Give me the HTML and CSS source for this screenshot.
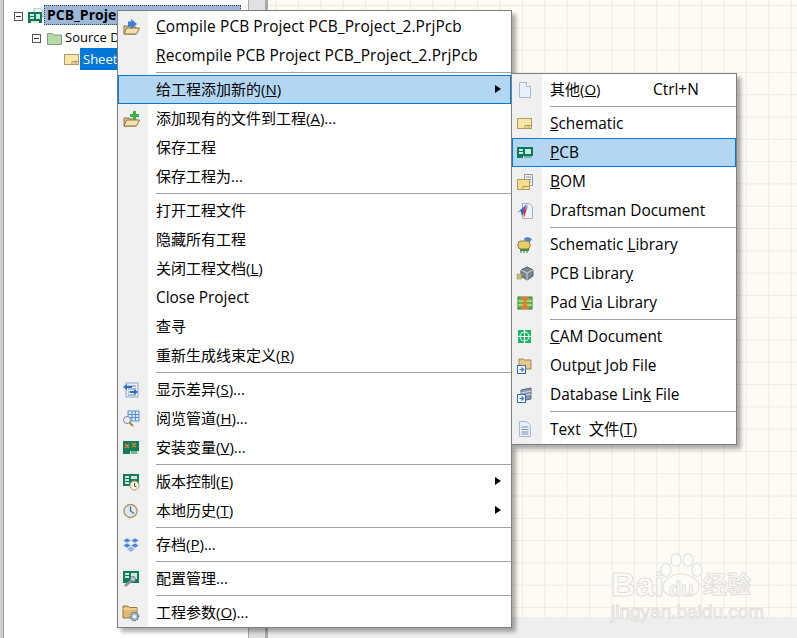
FILE: index.html
```html
<!DOCTYPE html>
<html lang="zh">
<head>
<meta charset="utf-8">
<title>PCB Project</title>
<link rel="stylesheet" href="styles.css">
</head>
<body>
<div class="app">
  <div class="rail"></div>
  <aside class="tree">
    <div class="row row-project">
      <span class="box"></span>
      <svg class="ticon" width="16" height="16" viewBox="0 0 16 16"><path d="M6 0h6l3 3v6H6z" fill="#eef1f6" stroke="#a9b2c4"/><rect x="0" y="4" width="14" height="11" fill="#0b7a5c"/><path d="M2 6h4v2H2zM2 9h4v2H2zM8 6h4v5H8z" fill="#cfe8dc"/><path d="M3 13h8v2H3z" fill="#e6e6d0"/></svg>
      <span class="label-project">PCB_Proje</span>
    </div>
    <div class="row row-source">
      <span class="box"></span>
      <svg class="ticon" width="15" height="13" viewBox="0 0 15 13"><path d="M.5 12.5V1.5h5l1.5 1.5h7.500v9.500z" fill="#b5dba8" stroke="#8a9a80"/></svg>
      <span class="label-source">Source D</span>
    </div>
    <div class="row row-sheet">
      <svg class="ticon" width="15" height="11" viewBox="0 0 15 11"><rect x=".5" y=".5" width="14" height="10" fill="#f6e7a8" stroke="#b49a5c"/><path d="M8 10.500V7.500h6.500M10 9h3" fill="none" stroke="#b49a5c"/></svg>
      <span class="label-sheet">Sheet</span>
    </div>
  </aside>
  <div class="split"></div>
  <div class="bar"></div>
  <main class="work">
    <div class="canvas"></div>
    <div class="foot"></div>
  </main>
</div>

<nav class="menu main-menu">
  <div class="item"><svg class="ic" width="18" height="18" viewBox="0 0 18 18"><path d="M2 8h5l1 1h6v7H2z" fill="#e0c690" stroke="#8a7448"/><path d="M2 16l2.500-6h13l-3 6z" fill="#f7e0aa" stroke="#8a7448"/><path d="M9 1l6 5-6 5V8.500H6v-5h3z" fill="#3d7fd9"/></svg><span class="lb en wide"><u>C</u>ompile PCB Project PCB_Project_2.PrjPcb</span></div>
  <div class="item"><span class="ic-empty"></span><span class="lb en wide"><u>R</u>ecompile PCB Project PCB_Project_2.PrjPcb</span></div>
  <div class="sep"></div>
  <div class="item hot"><span class="ic-empty"></span><span class="lb zh">给工程添加新的(<u>N</u>)</span><i class="arrow"></i></div>
  <div class="item"><svg class="ic" width="18" height="18" viewBox="0 0 18 18"><path d="M2 8h5l1 1h6v7H2z" fill="#e0c690" stroke="#8a7448"/><path d="M2 16l2.500-6h13l-3 6z" fill="#f7e0aa" stroke="#8a7448"/><path d="M11 1h3v3h3v3h-3v3h-3V7H8V4h3z" fill="#3cb043"/></svg><span class="lb zh">添加现有的文件到工程(<u>A</u>)...</span></div>
  <div class="item"><span class="ic-empty"></span><span class="lb zh">保存工程</span></div>
  <div class="item"><span class="ic-empty"></span><span class="lb zh">保存工程为...</span></div>
  <div class="sep"></div>
  <div class="item"><span class="ic-empty"></span><span class="lb zh">打开工程文件</span></div>
  <div class="item"><span class="ic-empty"></span><span class="lb zh">隐藏所有工程</span></div>
  <div class="item"><span class="ic-empty"></span><span class="lb zh">关闭工程文档(<u>L</u>)</span></div>
  <div class="item"><span class="ic-empty"></span><span class="lb en">Close Project</span></div>
  <div class="item"><span class="ic-empty"></span><span class="lb zh">查寻</span></div>
  <div class="item"><span class="ic-empty"></span><span class="lb zh">重新生成线束定义(<u>R</u>)</span></div>
  <div class="sep"></div>
  <div class="item"><svg class="ic" width="18" height="18" viewBox="0 0 18 18"><rect x="4" y="2" width="12" height="14" fill="#e8eef8" stroke="#8fa6c8"/><path d="M6 5h8M6 8h8M6 11h8M6 14h8" stroke="#6f8fc0"/><path d="M1 6l4-3v2h5v2H5v2zM16 11l-4 3v-2H8v-2h4V8z" fill="#2e6fc4"/></svg><span class="lb zh">显示差异(<u>S</u>)...</span></div>
  <div class="item"><svg class="ic" width="18" height="18" viewBox="0 0 18 18"><rect x="6" y="1" width="11" height="10" fill="#dbe8fa" stroke="#5b8fd8"/><path d="M6 4.500h11M6 7.500h11M10 1v10M13.500 1v10" stroke="#5b8fd8"/><circle cx="5" cy="10" r="3.500" fill="#eef2f6" stroke="#7a8696"/><path d="M7.500 12.500l3.500 3.500" stroke="#b0803c" stroke-width="2"/></svg><span class="lb zh">阅览管道(<u>H</u>)...</span></div>
  <div class="item"><svg class="ic" width="18" height="18" viewBox="0 0 18 18"><rect x="1" y="2" width="16" height="13" fill="#0f7c5c"/><path d="M3 5l4 4M7 5l-4 4M10 4l4 4M14 4l-4 4" stroke="#f08030" stroke-width="1.500"/><path d="M8 12h9v3H8z" fill="#d8e8c8"/><path d="M10 12v3M12 12v3M14 12v3" stroke="#0f7c5c"/></svg><span class="lb zh">安装变量(<u>V</u>)...</span></div>
  <div class="sep"></div>
  <div class="item"><svg class="ic" width="18" height="18" viewBox="0 0 18 18"><rect x="1" y="1" width="16" height="12" fill="#0f7c5c"/><path d="M3 3h4v2H3zM3 6h4v2H3zM3 9h4v2H3zM9 3h6v3H9z" fill="#cfe8dc"/><circle cx="12.500" cy="12.500" r="4.500" fill="#f4f4f0" stroke="#c09448"/><path d="M12.500 10v3l2 1" fill="none" stroke="#444"/></svg><span class="lb zh">版本控制(<u>E</u>)</span><i class="arrow"></i></div>
  <div class="item"><svg class="ic" width="18" height="18" viewBox="0 0 18 18"><circle cx="8.500" cy="9" r="6.500" fill="#dce8f6" stroke="#b79a58" stroke-width="1.400"/><path d="M8.500 4.500V9l3.500 2.500" fill="none" stroke="#5a6c84" stroke-width="1.300"/></svg><span class="lb zh">本地历史(<u>T</u>)</span><i class="arrow"></i></div>
  <div class="sep"></div>
  <div class="item"><svg class="ic" width="18" height="18" viewBox="0 0 18 18"><path d="M5 2l4 2.500L5 7 1 4.500zM13 2l4 2.500L13 7 9 4.500zM5 7l4 2.500L5 12 1 9.500zM13 7l4 2.500L13 12 9 9.500z" fill="#4a86d8" stroke="#dfeafa" stroke-width=".6"/><path d="M5 13l4 -2.500 4 2.500-4 3z" fill="#8fb8ec"/></svg><span class="lb zh">存档(<u>P</u>)...</span></div>
  <div class="sep"></div>
  <div class="item"><svg class="ic" width="18" height="18" viewBox="0 0 18 18"><rect x="1" y="1" width="16" height="12" fill="#0f7c5c"/><path d="M3 3h4v2H3zM3 6h4v2H3zM9 3h6v6H9z" fill="#cfe8dc"/><path d="M3 16l7-6" stroke="#8a8f98" stroke-width="2.500"/><circle cx="11" cy="9" r="2.500" fill="#c8ccd2" stroke="#7a7f88"/></svg><span class="lb zh">配置管理...</span></div>
  <div class="sep"></div>
  <div class="item"><svg class="ic" width="18" height="18" viewBox="0 0 18 18"><path d="M1 14V2h5l1.500 1.500H15V14z" fill="#e4b874" stroke="#a07838"/><path d="M1 5h14" stroke="#f6deb0"/><circle cx="12.500" cy="12.500" r="4" fill="#a8bcd4" stroke="#6a7c94" stroke-width="1.500" stroke-dasharray="1.500 .8"/><circle cx="12.500" cy="12.500" r="1.500" fill="#fff"/></svg><span class="lb zh">工程参数(<u>O</u>)...</span></div>
</nav>

<nav class="menu sub-menu">
  <div class="item"><svg class="ic" width="18" height="18" viewBox="0 0 18 18"><path d="M3.500 1.500h7l4 4v11h-11z" fill="#e8f0fb" stroke="#a8b8d0"/><path d="M10.500 1.500v4h4" fill="#fff" stroke="#a8b8d0"/></svg><span class="lb zh lb-grow">其他(<u>O</u>)</span><span class="key en">Ctrl+N</span></div>
  <div class="sep"></div>
  <div class="item"><svg class="ic" width="18" height="18" viewBox="0 0 18 18"><rect x="1.500" y="3.500" width="14" height="10" fill="#f6e7a8" stroke="#b49a5c"/><path d="M9 13.500v-3h6.500M11 12h3" fill="none" stroke="#b49a5c"/></svg><span class="lb en"><u>S</u>chematic</span></div>
  <div class="item hot"><svg class="ic" width="18" height="18" viewBox="0 0 18 18"><rect x="1" y="3" width="16" height="11" fill="#0b7a5c"/><path d="M3 5h4v2H3zM3 8h4v2H3zM9 5h6v5H9z" fill="#cfe8dc"/><path d="M7 12h10v2H7z" fill="#e6e6d0"/><path d="M9 12v2M11 12v2M13 12v2M15 12v2" stroke="#0b7a5c"/></svg><span class="lb en"><u>P</u>CB</span></div>
  <div class="item"><svg class="ic" width="18" height="18" viewBox="0 0 18 18"><rect x="8.500" y="1.500" width="8" height="11" fill="#f2f5fa" stroke="#8c98ac"/><path d="M10 4h5M10 6.500h5M10 9h5" stroke="#8c98ac"/><rect x="1.500" y="6.500" width="12" height="10" fill="#f6dd90" stroke="#b49a5c"/><path d="M7 16.500v-3h6.500" fill="none" stroke="#b49a5c"/></svg><span class="lb en"><u>B</u>OM</span></div>
  <div class="item"><svg class="ic" width="18" height="18" viewBox="0 0 18 18"><path d="M6.500 1.500h7l3 3v12h-10z" fill="#eef2fa" stroke="#a8b0c8"/><path d="M11 2L6 14l-1.500-5L1 11z" fill="#2a6ad0"/><path d="M12 3L8 16l-1-6z" fill="#d8343c"/></svg><span class="lb en">Draftsman Document</span></div>
  <div class="sep"></div>
  <div class="item"><svg class="ic" width="18" height="18" viewBox="0 0 18 18"><path d="M8 2l4-1 4 2-2 3H9z" fill="#4a86d0"/><rect x="2" y="5" width="12" height="8" rx="3" fill="#eccb70" stroke="#8a7c3c"/><path d="M4 13h9v2H4z" fill="#3c8c3c"/><path d="M5 15v2M8 15v2M11 15v2" stroke="#2f7a34"/></svg><span class="lb en">Schematic <u>L</u>ibrary</span></div>
  <div class="item"><svg class="ic" width="18" height="18" viewBox="0 0 18 18"><path d="M5 5l6-3 6 3v6l-6 4-6-4z" fill="#7a8690" stroke="#4c5660"/><path d="M5 5l6 3 6-3M11 8v7" fill="none" stroke="#cfd6dc"/><path d="M1 9h5v2H1zM1 12h5v2H1z" fill="#e4cd74" stroke="#8a7c3c" stroke-width=".5"/></svg><span class="lb en">PCB Librar<u>y</u></span></div>
  <div class="item"><svg class="ic" width="18" height="18" viewBox="0 0 18 18"><rect x="2" y="3" width="14" height="12" fill="#6fb04c" stroke="#3a7a30"/><path d="M2 7h14M2 11h14" stroke="#e8f0c0"/><path d="M5 3h8l-2.500 4v3l2.500 5H5l2.500-5V7z" fill="#e07c2c"/></svg><span class="lb en">Pad <u>V</u>ia Library</span></div>
  <div class="sep"></div>
  <div class="item"><svg class="ic" width="18" height="18" viewBox="0 0 18 18"><rect x="2" y="2" width="13" height="13" fill="#1fb06c"/><circle cx="8.500" cy="8.500" r="4.500" fill="none" stroke="#e8f8ee" stroke-width="1.200"/><path d="M8.500 2v13M2 8.500h13" stroke="#e8f8ee" stroke-width="1.200"/></svg><span class="lb en"><u>C</u>AM Document</span></div>
  <div class="item"><svg class="ic" width="18" height="18" viewBox="0 0 18 18"><path d="M3 8V2h4l1 1h7v9H8z" fill="#eac88c" stroke="#a88448"/><rect x="1.500" y="8.500" width="8" height="8" fill="#fff" stroke="#2e6fc4"/><path d="M3.500 12.500h3M5.500 10.500l2 2-2 2" fill="none" stroke="#2e6fc4" stroke-width="1.200"/></svg><span class="lb en">Outp<u>u</u>t Job File</span></div>
  <div class="item"><svg class="ic" width="18" height="18" viewBox="0 0 18 18"><path d="M5 4l10-2v11l-10 2z" fill="#8a96a8" stroke="#5a6678"/><path d="M5 7l10-2M5 10l10-2" stroke="#d8dee6"/><rect x="1.500" y="8.500" width="8" height="8" fill="#fff" stroke="#2e6fc4"/><path d="M3.500 12.500h3M5.500 10.500l2 2-2 2" fill="none" stroke="#2e6fc4" stroke-width="1.200"/></svg><span class="lb en">Database Lin<u>k</u> File</span></div>
  <div class="sep"></div>
  <div class="item"><svg class="ic" width="18" height="18" viewBox="0 0 18 18"><path d="M3.500 1.500h7l4 4v11h-11z" fill="#e8f0fb" stroke="#a8b8d0"/><path d="M5.500 7h7M5.500 9.500h7M5.500 12h7M5.500 14h7" stroke="#8090a8"/></svg><span class="lb en">Text &nbsp;文件(<u>T</u>)</span></div>
</nav>

<div class="mark">
  <span class="mark-bai">Bai</span>
  <svg class="paw" width="44" height="48" viewBox="0 0 44 48"><g fill="#fdfbf7" stroke="#e4e2dd" stroke-width="1.200"><ellipse cx="7" cy="17" rx="5" ry="6.500"/><ellipse cx="17" cy="7" rx="5" ry="6.500"/><ellipse cx="29" cy="7" rx="5" ry="6.500"/><ellipse cx="38" cy="17" rx="5" ry="6.500"/><path d="M4 34c0-8 10-13 18-13s18 5 18 13c0 6-6 9-10 9H14c-5 0-10-3-10-9z"/></g></svg>
  <span class="mark-du">du</span>
  <span class="mark-zh">经验</span>
  <span class="mark-url">jingyan.baidu.com</span>
</div>
</body>
</html>
```
FILE: styles.css
```css
* { box-sizing: border-box; }
html, body { margin: 0; padding: 0; }
body {
  width: 797px;
  height: 638px;
  overflow: hidden;
  position: relative;
  font-family: "Open Sans", "Noto Sans CJK SC", sans-serif;
  font-size: 15px;
  color: #000;
  background: #fff;
}
.app { display: flex; width: 797px; height: 638px; }
.rail { width: 4px; background: #cfcfcf; border-right: 1px solid #9a9a9a; }
.tree { width: 244px; padding-top: 5px; background: #fff; font-size: 13px; }
.row { display: flex; align-items: center; height: 22px; white-space: nowrap; }
.row-project { padding-left: 10px; }
.row-source { padding-left: 28px; }
.row-sheet { padding-left: 60px; margin-top: -1px; }
.box {
  width: 9px; height: 9px; flex: none;
  border: 1px solid #555; background: #fff;
  position: relative;
}
.box::after {
  content: ""; position: absolute; left: 1px; right: 1px; top: 3px; height: 1px; background: #333;
}
.row-project .ticon { margin-left: 5px; }
.row-source .ticon { margin-left: 6px; margin-right: 3px; }
.row-sheet .ticon { margin-right: 1px; }
.label-project {
  width: 197px; height: 20px; line-height: 18px; margin-bottom: 2px;
  padding-left: 2px; font-size: 14px; font-weight: 700; overflow: hidden;
  background: #9db7d8; border: 1px dotted #444;
}
.label-source { margin-bottom: 2px; }
.label-sheet {
  height: 22px; line-height: 22px; padding: 0 3px; width: 40px;
  background: #0078d7; color: #fff;
}
.split { width: 17px; background: #e1e1e1; border-left: 1px solid #a8a8a8; }
.bar { width: 3px; background: #a9a9a9; }
.work { flex: 1; display: flex; flex-direction: column; }
.canvas {
  flex: 1;
  background-color: #fefbf5;
  background-image:
    linear-gradient(90deg, #ecebe6 1px, transparent 1px),
    linear-gradient(0deg, #ecebe6 1px, transparent 1px);
  background-size: 22.4px 22.3px;
  background-position: 7.6px 6px;
}
.foot { height: 21px; background: #eee; }

.menu {
  position: absolute;
  display: flex;
  flex-direction: column;
  padding: 1px 0 0;
  border: 1px solid #7f7f7f;
  box-shadow: 4px 4px 4px rgba(0, 0, 0, .32);
  background: linear-gradient(90deg, #f0f0f0 30px, #fff 30px);
  white-space: nowrap;
}
.main-menu { left: 117px; top: 10px; width: 395px; height: 618px; }
.sub-menu { left: 511px; top: 73px; width: 226px; height: 372px; }
.item { display: flex; align-items: center; flex: none; height: 29px; position: relative; }
.hot { background: #b3d7f3; outline: 1px solid #0078d7; outline-offset: -1px; }
.ic { flex: none; margin-left: 4px; margin-right: 16px; }
.ic-empty { flex: none; width: 38px; }
.lb { display: block; }
.en { font-size: 15.4px; }
.wide { letter-spacing: .12px; }
.zh { margin-bottom: 2px; }
.lb-grow { width: 103px; }
.key { display: block; }
.arrow {
  position: absolute; right: 10px; top: 10px;
  width: 0; height: 0;
  border-left: 6px solid #000;
  border-top: 4px solid transparent;
  border-bottom: 4px solid transparent;
}
.sep { flex: none; height: 5px; margin-left: 38px; background: linear-gradient(#0000 2px, #a0a0a0 2px, #a0a0a0 3px, #0000 3px); }

.mark { position: absolute; left: 611px; top: 553px; width: 145px; height: 66px; }
.mark span { position: absolute; }
.paw { position: absolute; left: 48px; top: 0; }
.mark-bai, .mark-du, .mark-url, .mark-zh {
  color: #fdfbf7;
  -webkit-text-stroke: 1px #e2e0db;
  line-height: 1;
}
.mark-bai { left: 0; top: 14px; font: 700 34px/1 "Liberation Sans", sans-serif; }
.mark-du { left: 58px; top: 26px; font: 700 20px/1 "Liberation Sans", sans-serif; }
.mark-zh { left: 92px; top: 18px; font: 700 24px/1 "Noto Sans CJK SC", sans-serif; }
.mark-url { left: 0; top: 49px; font: 400 19px/1 "Liberation Sans", sans-serif; white-space: nowrap; }
```
